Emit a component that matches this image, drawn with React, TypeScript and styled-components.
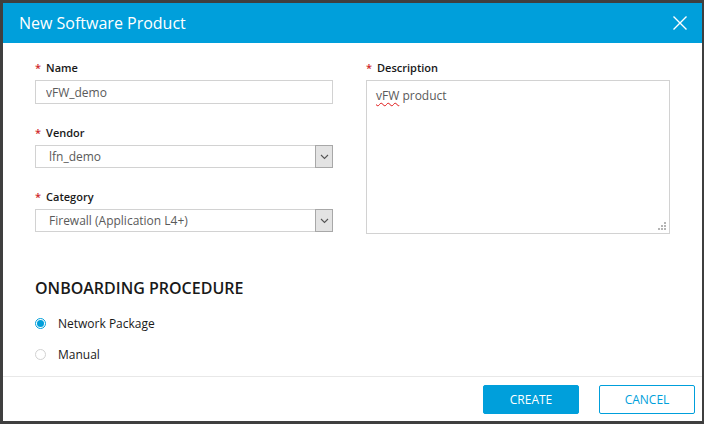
import React, { useState } from "react";
import styled, { createGlobalStyle } from "styled-components";

const GlobalStyle = createGlobalStyle`
  html, body {
    margin: 0;
    padding: 0;
    background: #3f3f3f;
    font-family: "Open Sans", "Liberation Sans", sans-serif;
  }
  * { box-sizing: border-box; }
`;

const Page = styled.div`
  width: 704px;
  height: 424px;
  padding: 3px 2px 3px 3px;
`;

const Modal = styled.div`
  width: 699px;
  height: 418px;
  background: #ffffff;
  display: flex;
  flex-direction: column;
`;

const Header = styled.div`
  height: 40px;
  background: #009fdb;
  display: flex;
  align-items: center;
  justify-content: space-between;
  padding: 0 14px 0 16px;
`;

const Title = styled.div`
  color: #ffffff;
  font-size: 16px;
  line-height: 24px;
`;

const Close = styled.button`
  border: none;
  background: transparent;
  padding: 0;
  width: 16px;
  height: 16px;
  display: flex;
  cursor: pointer;
`;

const Body = styled.div`
  flex: 1;
  padding: 17px 32px 0 32px;
`;

const Columns = styled.div`
  display: grid;
  grid-template-columns: 298px 1fr;
  column-gap: 33px;
`;

const Column = styled.div`
  display: flex;
  flex-direction: column;
`;

const Field = styled.div`
  display: flex;
  flex-direction: column;
  margin-bottom: 21px;
`;

const Label = styled.label`
  font-size: 11px;
  font-weight: 600;
  color: #191919;
  line-height: 16px;
  margin-bottom: 4px;
  &::before {
    content: "*";
    color: #cf2a2a;
    margin-right: 5px;
  }
`;

const Input = styled.input`
  height: 24px;
  border: 1px solid #d2d2d2;
  padding: 0 10px;
  font-family: inherit;
  font-size: 12px;
  color: #5a5a5a;
  outline: none;
`;

const SelectBox = styled.div`
  height: 23px;
  border: 1px solid #d2d2d2;
  display: flex;
  align-items: stretch;
`;

const SelectValue = styled.div`
  flex: 1;
  padding: 0 13px;
  font-size: 12px;
  color: #5a5a5a;
  display: flex;
  align-items: center;
`;

const SelectArrow = styled.span`
  width: 18px;
  background: #e3e3e3;
  border: 1px solid #a8a8a8;
  margin: -1px -1px -1px 0;
  display: flex;
  align-items: center;
  justify-content: center;
`;

const TextArea = styled.div`
  position: relative;
  height: 154px;
  border: 1px solid #d2d2d2;
  padding: 7px 9px;
  font-size: 12px;
  color: #5a5a5a;
  line-height: 16px;
`;

const Misspelled = styled.span`
  text-decoration: underline wavy #e01818;
  text-decoration-thickness: 1px;
  text-underline-offset: 2px;
`;

const Grip = styled.svg`
  position: absolute;
  right: 2px;
  bottom: 2px;
`;

const SectionTitle = styled.div`
  margin-top: 22px;
  font-size: 16px;
  font-weight: 600;
  color: #191919;
  line-height: 22px;
`;

const RadioRow = styled.label<{ $first?: boolean }>`
  display: flex;
  align-items: center;
  height: 16px;
  margin-top: ${(p) => (p.$first ? "16px" : "15px")};
  font-size: 12px;
  color: #191919;
  cursor: pointer;
`;

const RadioDot = styled.span<{ $checked: boolean }>`
  width: 11px;
  height: 11px;
  border-radius: 50%;
  border: 1px solid ${(p) => (p.$checked ? "#009fdb" : "#d2d2d2")};
  margin-right: 12px;
  display: flex;
  align-items: center;
  justify-content: center;
  &::after {
    content: "";
    width: 7px;
    height: 7px;
    border-radius: 50%;
    background: ${(p) => (p.$checked ? "#009fdb" : "transparent")};
  }
`;

const Footer = styled.div`
  height: 45px;
  border-top: 1px solid #e8e8e8;
  display: flex;
  align-items: center;
  justify-content: flex-end;
  gap: 20px;
  padding: 0 7px 0 0;
`;

const Button = styled.button<{ $primary?: boolean }>`
  width: 96px;
  height: 29px;
  border-radius: 2px;
  font-family: inherit;
  font-size: 12px;
  border: 1px solid #009fdb;
  background: ${(p) => (p.$primary ? "#009fdb" : "#ffffff")};
  color: ${(p) => (p.$primary ? "#ffffff" : "#009fdb")};
  cursor: pointer;
`;

function Chevron() {
  return (
    <svg width="9" height="6" viewBox="0 0 9 6">
      <path d="M1 1 L4.5 4.5 L8 1" fill="none" stroke="#555" strokeWidth="1.1" />
    </svg>
  );
}

function Select({ value }: { value: string }) {
  return (
    <SelectBox>
      <SelectValue>{value}</SelectValue>
      <SelectArrow>
        <Chevron />
      </SelectArrow>
    </SelectBox>
  );
}

export default function App() {
  const [procedure, setProcedure] = useState("network");
  return (
    <Page>
      <GlobalStyle />
      <Modal>
        <Header>
          <Title>New Software Product</Title>
          <Close aria-label="close">
            <svg width="16" height="16" viewBox="0 0 16 16">
              <path d="M1.5 1.5 L14.5 14.5 M14.5 1.5 L1.5 14.5" stroke="#fff" strokeWidth="1.4" />
            </svg>
          </Close>
        </Header>
        <Body>
          <Columns>
            <Column>
              <Field>
                <Label>Name</Label>
                <Input defaultValue="vFW_demo" />
              </Field>
              <Field>
                <Label>Vendor</Label>
                <Select value="lfn_demo" />
              </Field>
              <Field>
                <Label>Category</Label>
                <Select value="Firewall (Application L4+)" />
              </Field>
            </Column>
            <Column>
              <Field>
                <Label>Description</Label>
                <TextArea>
                  <Misspelled>vFW</Misspelled> product
                  <Grip width="9" height="9" viewBox="0 0 9 9">
                    <g fill="#b5b5b5">
                      <rect x="6" y="0" width="2" height="2" />
                      <rect x="3" y="3" width="2" height="2" />
                      <rect x="6" y="3" width="2" height="2" />
                      <rect x="0" y="6" width="2" height="2" />
                      <rect x="3" y="6" width="2" height="2" />
                      <rect x="6" y="6" width="2" height="2" />
                    </g>
                  </Grip>
                </TextArea>
              </Field>
            </Column>
          </Columns>
          <SectionTitle>ONBOARDING PROCEDURE</SectionTitle>
          <RadioRow $first onClick={() => setProcedure("network")}>
            <RadioDot $checked={procedure === "network"} />
            Network Package
          </RadioRow>
          <RadioRow onClick={() => setProcedure("manual")}>
            <RadioDot $checked={procedure === "manual"} />
            Manual
          </RadioRow>
        </Body>
        <Footer>
          <Button $primary>CREATE</Button>
          <Button>CANCEL</Button>
        </Footer>
      </Modal>
    </Page>
  );
}
